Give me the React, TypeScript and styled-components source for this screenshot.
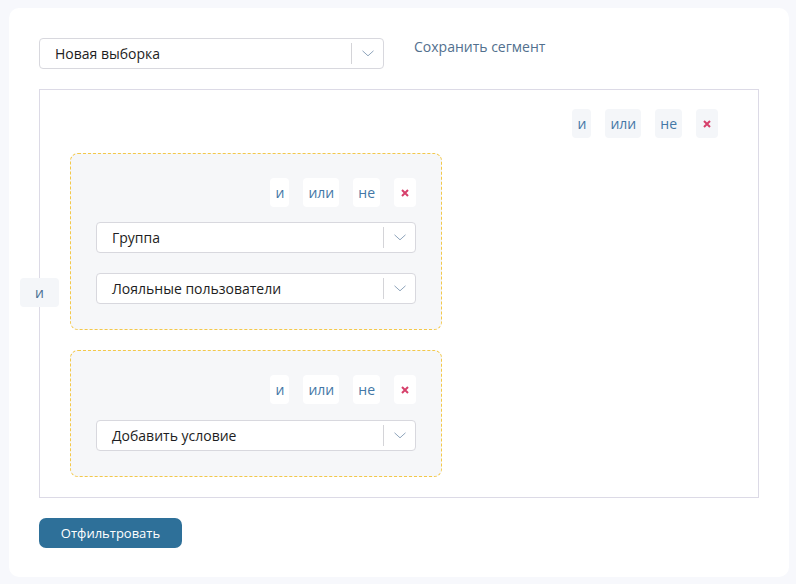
import styled, { createGlobalStyle } from "styled-components";

const GlobalStyle = createGlobalStyle`
  html, body {
    margin: 0;
    padding: 0;
    background: #f7f8fc;
    font-family: "Open Sans", "Noto Sans", sans-serif;
  }
  * {
    box-sizing: border-box;
  }
`;

const Page = styled.div`
  padding: 8px 7px 7px 9px;
  min-height: 584px;
`;

const Card = styled.div`
  background: #fff;
  border-radius: 10px;
  padding: 30px 30px 29px 30px;
  height: 569px;
`;

const TopRow = styled.div`
  display: flex;
  align-items: flex-start;
  gap: 30px;
`;

const SelectBox = styled.div<{ $width: number }>`
  width: ${(p) => p.$width}px;
  height: 31px;
  border: 1px solid #d8d8de;
  border-radius: 4px;
  background: #fff;
  display: flex;
  align-items: center;
  padding-left: 15px;
  font-size: 14px;
  color: #1d1d22;
`;

const SelectText = styled.span`
  flex: 1;
`;

const SelectDivider = styled.span`
  width: 1px;
  height: 21px;
  background: #d4d4d8;
`;

const ChevronWrap = styled.span`
  width: 31px;
  display: flex;
  justify-content: center;
  align-items: center;
`;

const SaveLink = styled.span`
  font-size: 14px;
  line-height: 20px;
  margin-top: -1px;
  color: #52708e;
  cursor: pointer;
`;

const RuleBox = styled.div`
  position: relative;
  margin-top: 20px;
  border: 1px solid #dcdae6;
  height: 409px;
  padding: 19px 40px 19px 30px;
`;

const ActionRow = styled.div`
  display: flex;
  justify-content: flex-end;
  gap: 14px;
`;

const ActionButton = styled.button<{ $light?: boolean }>`
  height: 29px;
  padding: 0 5px;
  min-width: 19px;
  border: 0;
  border-radius: 4px;
  background: ${(p) => (p.$light ? "#ffffff" : "#f4f6f9")};
  color: #4477a6;
  font-family: inherit;
  font-size: 14px;
  display: flex;
  align-items: center;
  justify-content: center;
  cursor: pointer;
`;

const CloseButton = styled(ActionButton)`
  width: 22px;
  padding: 0;
`;

const Groups = styled.div`
  display: flex;
  flex-direction: column;
  gap: 20px;
  margin-top: 15px;
`;

const Group = styled.div`
  width: 372px;
  border: 1px dashed #f3c84a;
  border-radius: 8px;
  background: #f6f7f9;
  padding: 24px 25px 25px 25px;
`;

const GroupSelects = styled.div<{ $first?: boolean }>`
  display: flex;
  flex-direction: column;
  gap: 20px;
  margin-top: ${(p) => (p.$first ? 15 : 16)}px;
`;

const JoinBadge = styled.div`
  position: absolute;
  left: -20px;
  top: 188px;
  width: 39px;
  height: 29px;
  border-radius: 4px;
  background: #f4f6f9;
  color: #4a6f93;
  font-size: 14px;
  display: flex;
  align-items: center;
  justify-content: center;
`;

const SubmitButton = styled.button`
  margin-top: 20px;
  width: 143px;
  height: 30px;
  border: 0;
  border-radius: 7px;
  background: #2e7099;
  color: #fff;
  font-family: inherit;
  font-size: 13px;
  cursor: pointer;
`;

function Chevron() {
  return (
    <svg width="12" height="7" viewBox="0 0 12 7">
      <path d="M0.5 0.8 L6 5.8 L11.5 0.8" fill="none" stroke="#8fa4bb" strokeWidth="1" />
    </svg>
  );
}

function Select({ label, width }: { label: string; width: number }) {
  return (
    <SelectBox $width={width}>
      <SelectText>{label}</SelectText>
      <SelectDivider />
      <ChevronWrap>
        <Chevron />
      </ChevronWrap>
    </SelectBox>
  );
}

function Actions({ light }: { light?: boolean }) {
  return (
    <ActionRow>
      <ActionButton $light={light}>и</ActionButton>
      <ActionButton $light={light}>или</ActionButton>
      <ActionButton $light={light}>не</ActionButton>
      <CloseButton $light={light}>
        <svg width="8" height="8" viewBox="0 0 8 8">
          <path d="M1 1 L7 7 M7 1 L1 7" stroke="#d6406b" strokeWidth="2" />
        </svg>
      </CloseButton>
    </ActionRow>
  );
}

export default function App() {
  return (
    <Page>
      <GlobalStyle />
      <Card>
        <TopRow>
          <Select label="Новая выборка" width={345} />
          <SaveLink>Сохранить сегмент</SaveLink>
        </TopRow>
        <RuleBox>
          <Actions />
          <Groups>
            <Group>
              <Actions light />
              <GroupSelects $first>
                <Select label="Группа" width={320} />
                <Select label="Лояльные пользователи" width={320} />
              </GroupSelects>
            </Group>
            <Group>
              <Actions light />
              <GroupSelects>
                <Select label="Добавить условие" width={320} />
              </GroupSelects>
            </Group>
          </Groups>
          <JoinBadge>и</JoinBadge>
        </RuleBox>
        <SubmitButton>Отфильтровать</SubmitButton>
      </Card>
    </Page>
  );
}
